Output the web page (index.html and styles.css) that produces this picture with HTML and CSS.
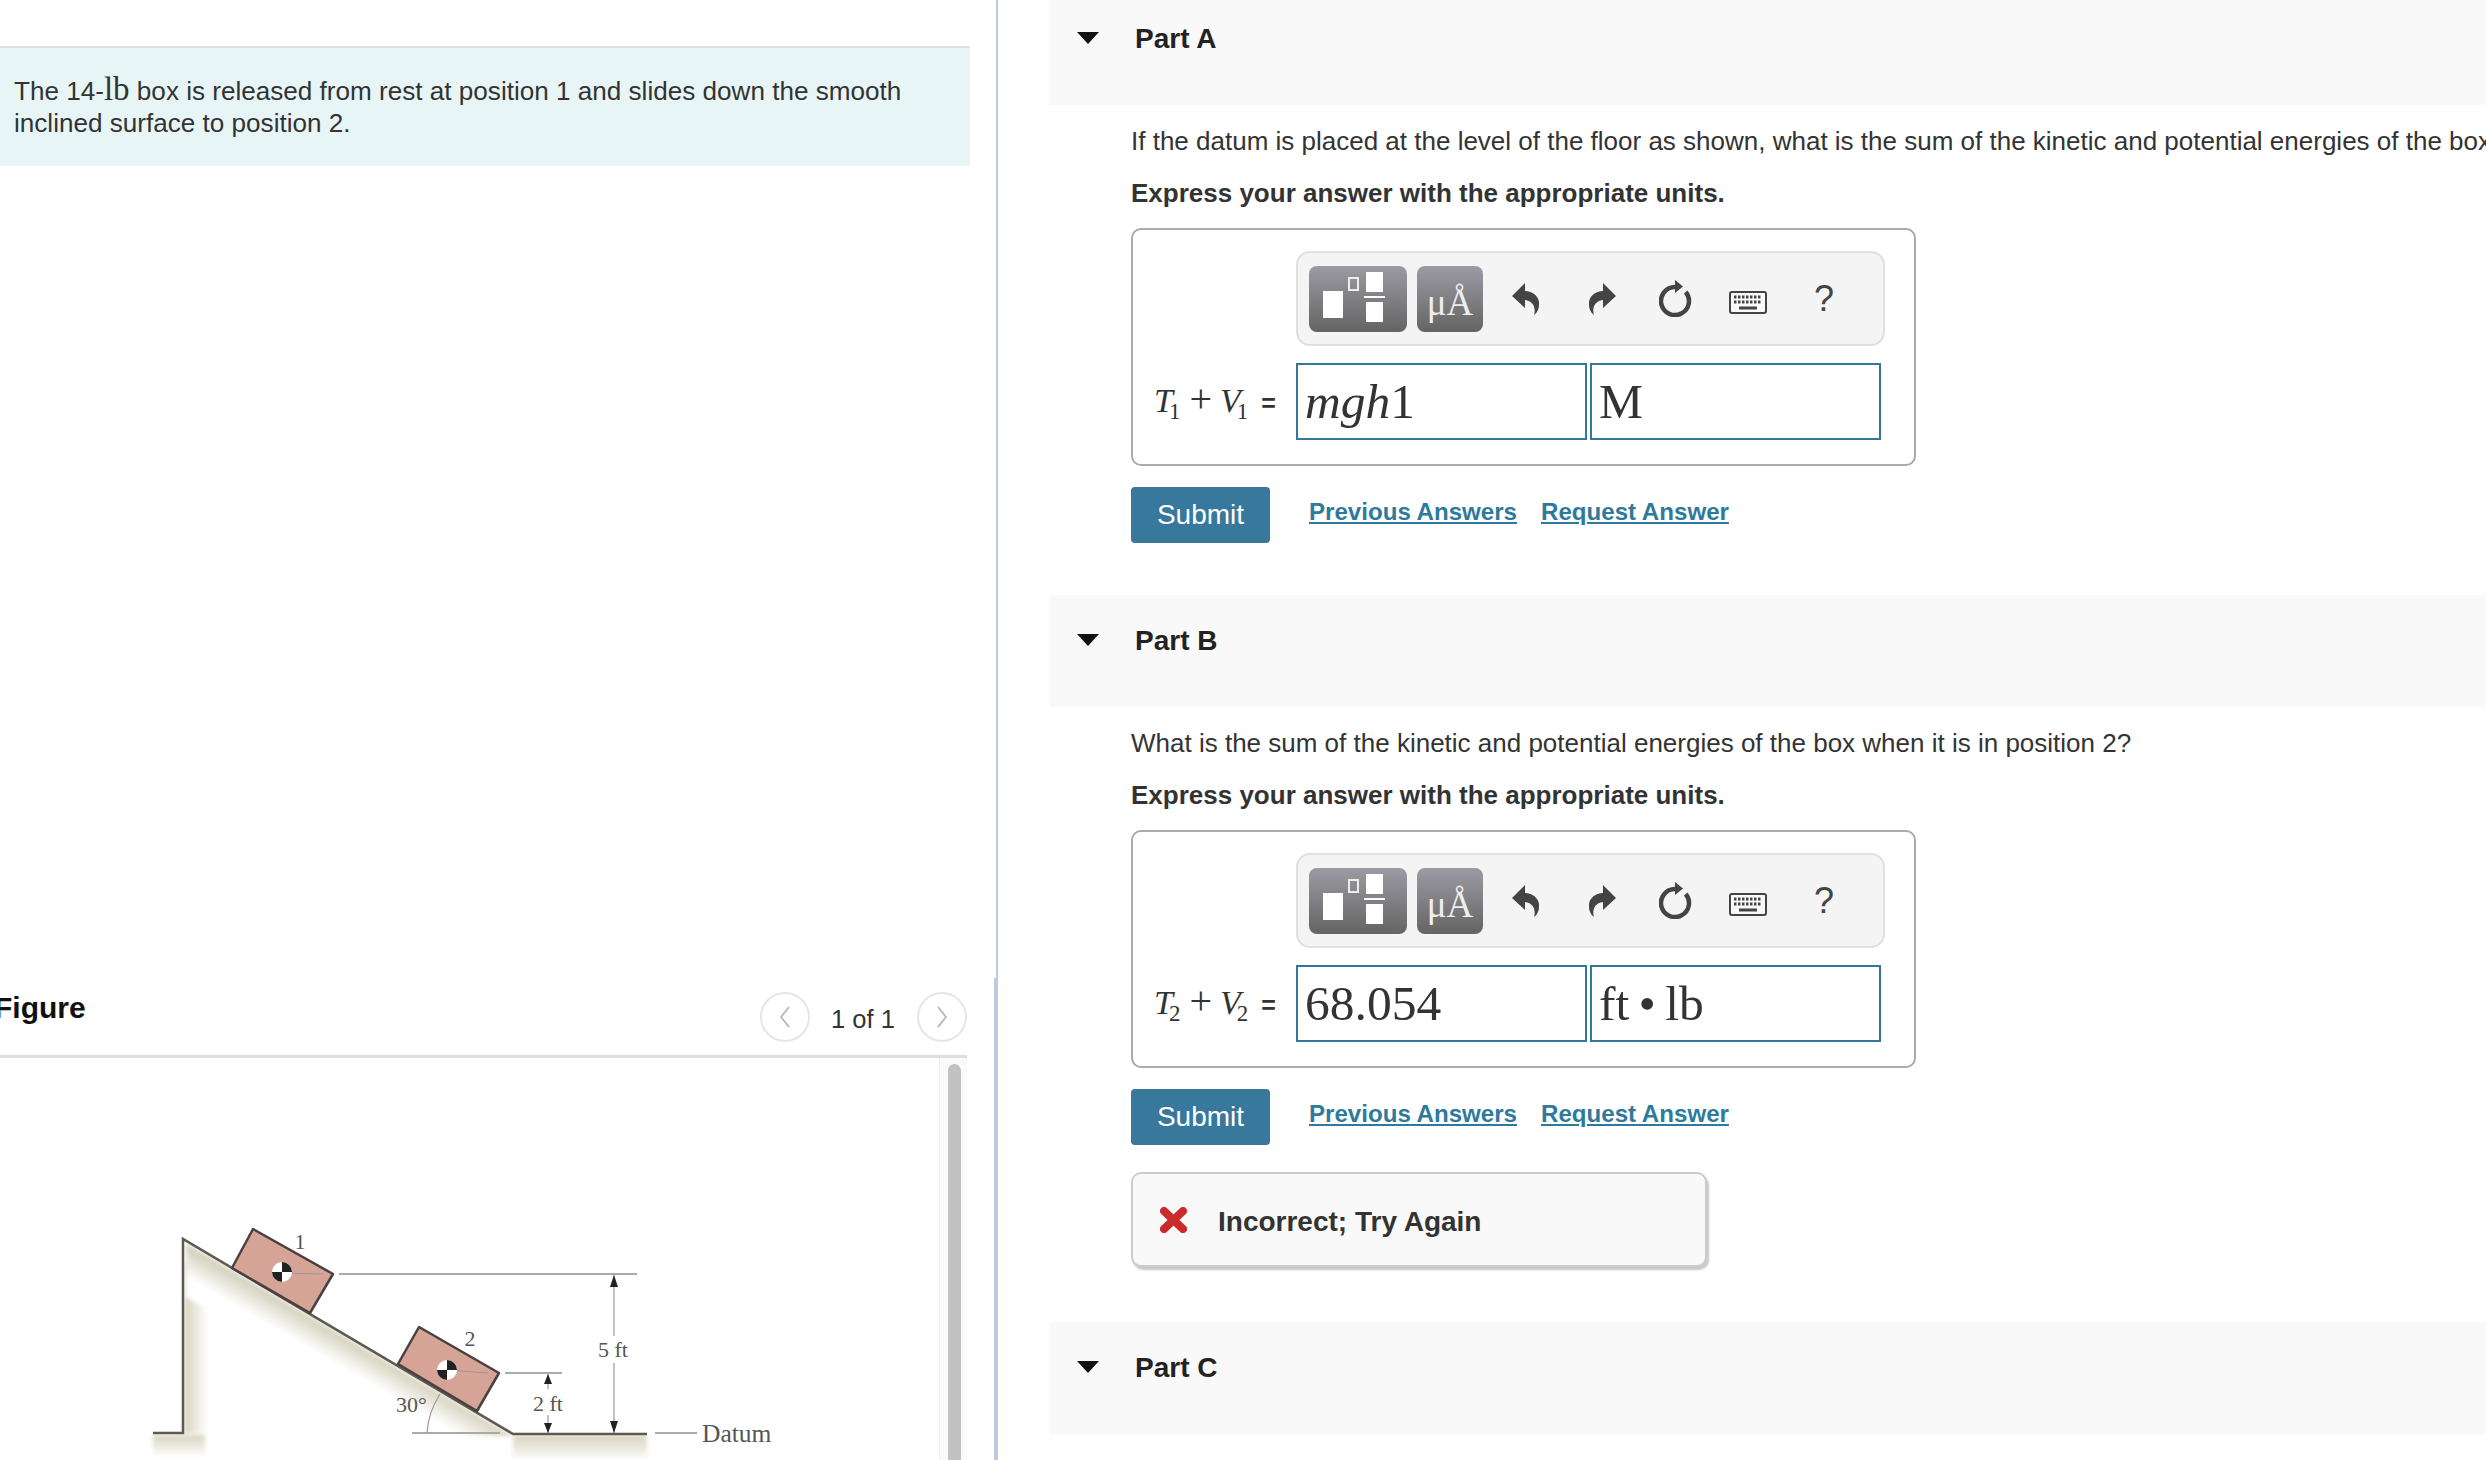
FILE: index.html
```html
<!DOCTYPE html>
<html lang="en">
<head>
    <meta charset="UTF-8">
    <title>Mastering Physics - Box on incline</title>
    <link rel="stylesheet" href="styles.css">
</head>
<body>
    <div class="left-pane">
        <div class="left-top">
            <div class="intro">
                The 14-<span class="unit">lb</span> box is released from rest at position 1 and slides down the smooth inclined surface to position 2.
            </div>
        </div>
        <div class="left-bottom">
            <div class="figure-head">
                <h2>Figure</h2>
                <div class="pager">
                    <span class="pager-btn">
                        <svg width="10" height="22" viewBox="0 0 10 22"><polyline points="9,1 1,11 9,21"/></svg>
                    </span>
                    <span class="pager-count">1 of 1</span>
                    <span class="pager-btn">
                        <svg width="10" height="22" viewBox="0 0 10 22"><polyline points="1,1 9,11 1,21"/></svg>
                    </span>
                </div>
            </div>
            <div class="figure-panel">
                <svg class="diagram" width="939" height="403" viewBox="0 1057 939 403">
                    <defs>
                        <linearGradient id="wallShade" x1="0" y1="0" x2="1" y2="0">
                            <stop offset="0" stop-color="#d6d2bd"/>
                            <stop offset="1" stop-color="#fff"/>
                        </linearGradient>
                        <linearGradient id="slopeShade" gradientUnits="userSpaceOnUse" x1="348" y1="1335" x2="333" y2="1361">
                            <stop offset="0" stop-color="#d0ccb6"/>
                            <stop offset="1" stop-color="#fff"/>
                        </linearGradient>
                        <linearGradient id="floorShade" x1="0" y1="0" x2="0" y2="1">
                            <stop offset="0" stop-color="#d6d2bd"/>
                            <stop offset="1" stop-color="#fff"/>
                        </linearGradient>
                        <filter id="soft" x="-10%" y="-10%" width="120%" height="120%">
                            <feGaussianBlur stdDeviation="2"/>
                        </filter>
                    </defs>
                    <!-- shading under the ramp and floor -->
                    <g filter="url(#soft)">
                        <rect x="184" y="1262" width="24" height="170" fill="url(#wallShade)"/>
                        <polygon points="186,1242 513,1435 425,1435 186,1296" fill="url(#slopeShade)"/>
                        <rect x="153" y="1434" width="52" height="22" fill="url(#floorShade)"/>
                        <rect x="513" y="1434" width="134" height="26" fill="url(#floorShade)"/>
                    </g>
                    <!-- ramp outline -->
                    <polyline class="ramp" points="153,1432 183,1432 183,1238 513,1433 647,1433"/>
                    <!-- boxes -->
                    <polygon class="box" points="253,1228 333,1273 310,1312 232,1267"/>
                    <polygon class="box" points="419,1326 499,1372 477,1410 398,1363"/>
                    <line class="thin" x1="282" y1="1272" x2="323" y2="1273"/>
                    <line class="thin" x1="447" y1="1369" x2="488" y2="1372"/>
                    <circle cx="282" cy="1271" r="10" fill="#fff"/>
                    <path d="M282 1271 L282 1261 A10 10 0 0 1 292 1271 Z M282 1271 L282 1281 A10 10 0 0 1 272 1271 Z" fill="#222"/>
                    <circle cx="447" cy="1369" r="10" fill="#fff"/>
                    <path d="M447 1369 L447 1359 A10 10 0 0 1 457 1369 Z M447 1369 L447 1379 A10 10 0 0 1 437 1369 Z" fill="#222"/>
                    <!-- dimensions -->
                    <line class="dim" x1="339" y1="1273" x2="637" y2="1273"/>
                    <line class="dim" x1="505" y1="1372" x2="562" y2="1372"/>
                    <line class="dim" x1="412" y1="1432" x2="500" y2="1432"/>
                    <line class="dim" x1="655" y1="1432" x2="697" y2="1432"/>
                    <line class="thin" x1="614" y1="1274" x2="614" y2="1335"/>
                    <line class="thin" x1="614" y1="1362" x2="614" y2="1432"/>
                    <line class="thin" x1="548" y1="1373" x2="548" y2="1388"/>
                    <line class="thin" x1="548" y1="1414" x2="548" y2="1432"/>
                    <path class="thin no-fill" d="M440 1393 Q428 1412 427 1432"/>
                    <polygon class="arrow" points="614,1274 610,1286 618,1286"/>
                    <polygon class="arrow" points="614,1432 610,1420 618,1420"/>
                    <polygon class="arrow" points="548,1373 544,1383 552,1383"/>
                    <polygon class="arrow" points="548,1432 544,1422 552,1422"/>
                    <text x="300" y="1248" text-anchor="middle">1</text>
                    <text x="470" y="1345" text-anchor="middle">2</text>
                    <text x="396" y="1411">30°</text>
                    <text x="613" y="1356" text-anchor="middle">5 ft</text>
                    <text x="548" y="1410" text-anchor="middle">2 ft</text>
                    <text class="datum" x="702" y="1441">Datum</text>
                </svg>
                <div class="scrollbar"><div class="scroll-thumb"></div></div>
            </div>
        </div>
    </div>

    <div class="right-pane">
        <div class="part-head"><span class="caret"></span><h3>Part A</h3></div>
        <div class="part-body">
            <p class="question">If the datum is placed at the level of the floor as shown, what is the sum of the kinetic and potential energies of the box when it is in position 1?</p>
            <p class="hint">Express your answer with the appropriate units.</p>
            <div class="answer-box">
                <div class="toolbar">
                    <span class="tool tool-frac">
                        <i class="frac-solid"></i>
                        <i class="frac-small"></i>
                        <span class="frac-stack"><i></i><i class="frac-bar"></i><i></i></span>
                    </span>
                    <span class="tool tool-units">μÅ</span>
                    <svg class="ic-undo" width="27" height="32" viewBox="0 0 27 32"><path d="M0 13 L13 0 V8 C22 8 28 15 27 22 C27 26 25 30 22 32 C24 26 22 18 13 17 V25 Z"/></svg>
                    <svg class="ic-redo" width="27" height="32" viewBox="0 0 27 32"><path d="M0 13 L13 0 V8 C22 8 28 15 27 22 C27 26 25 30 22 32 C24 26 22 18 13 17 V25 Z"/></svg>
                    <svg class="ic-reset" width="34" height="37" viewBox="0 0 34 37"><path class="ring" d="M26.7 12 A14 14 0 1 1 16 7"/><polygon points="16,0 24,6.5 16,13"/></svg>
                    <svg class="ic-keys" width="38" height="23" viewBox="0 0 38 23"><rect class="kb-frame" x="1" y="1" width="36" height="21" rx="2"/><line x1="5" y1="6" x2="33" y2="6"/><line x1="5" y1="11" x2="33" y2="11"/><line class="kb-space" x1="10" y1="17" x2="28" y2="17"/></svg>
                    <span class="tool-help">?</span>
                </div>
                <div class="formula">
                    <span class="formula-label"><i>T</i><sub>1</sub><span class="plus">+</span><i>V</i><sub>1</sub><span class="eq">=</span></span>
                    <div class="field"><i>mgh</i>1</div>
                    <div class="field">M</div>
                </div>
            </div>
            <div class="actions">
                <button class="submit">Submit</button>
                <a href="#">Previous Answers</a>
                <a href="#">Request Answer</a>
            </div>
        </div>

        <div class="part-head"><span class="caret"></span><h3>Part B</h3></div>
        <div class="part-body">
            <p class="question">What is the sum of the kinetic and potential energies of the box when it is in position 2?</p>
            <p class="hint">Express your answer with the appropriate units.</p>
            <div class="answer-box">
                <div class="toolbar">
                    <span class="tool tool-frac">
                        <i class="frac-solid"></i>
                        <i class="frac-small"></i>
                        <span class="frac-stack"><i></i><i class="frac-bar"></i><i></i></span>
                    </span>
                    <span class="tool tool-units">μÅ</span>
                    <svg class="ic-undo" width="27" height="32" viewBox="0 0 27 32"><path d="M0 13 L13 0 V8 C22 8 28 15 27 22 C27 26 25 30 22 32 C24 26 22 18 13 17 V25 Z"/></svg>
                    <svg class="ic-redo" width="27" height="32" viewBox="0 0 27 32"><path d="M0 13 L13 0 V8 C22 8 28 15 27 22 C27 26 25 30 22 32 C24 26 22 18 13 17 V25 Z"/></svg>
                    <svg class="ic-reset" width="34" height="37" viewBox="0 0 34 37"><path class="ring" d="M26.7 12 A14 14 0 1 1 16 7"/><polygon points="16,0 24,6.5 16,13"/></svg>
                    <svg class="ic-keys" width="38" height="23" viewBox="0 0 38 23"><rect class="kb-frame" x="1" y="1" width="36" height="21" rx="2"/><line x1="5" y1="6" x2="33" y2="6"/><line x1="5" y1="11" x2="33" y2="11"/><line class="kb-space" x1="10" y1="17" x2="28" y2="17"/></svg>
                    <span class="tool-help">?</span>
                </div>
                <div class="formula">
                    <span class="formula-label"><i>T</i><sub>2</sub><span class="plus">+</span><i>V</i><sub>2</sub><span class="eq">=</span></span>
                    <div class="field">68.054</div>
                    <div class="field">ft • lb</div>
                </div>
            </div>
            <div class="actions">
                <button class="submit">Submit</button>
                <a href="#">Previous Answers</a>
                <a href="#">Request Answer</a>
            </div>
            <div class="feedback">
                <svg width="27" height="26" viewBox="0 0 27 26"><line x1="4" y1="4" x2="23" y2="22"/><line x1="23" y1="4" x2="4" y2="22"/></svg>
                <span>Incorrect; Try Again</span>
            </div>
        </div>

        <div class="part-head"><span class="caret"></span><h3>Part C</h3></div>
    </div>
</body>
</html>
```

FILE: styles.css
```css
* { margin: 0; padding: 0; box-sizing: border-box; }
html, body { height: 100%; }
body {
    width: 2486px;
    height: 1460px;
    overflow: hidden;
    display: flex;
    background: #fff;
    color: #333;
    font-family: "Liberation Sans", Arial, sans-serif;
}

/* left pane */
.left-pane {
    width: 998px;
    height: 1460px;
    flex: none;
    display: flex;
    flex-direction: column;
}
.left-top {
    height: 978px;
    padding-top: 46px;
    border-right: 2px solid #bccbdf;
}
.left-bottom {
    flex: 1;
    min-height: 0;
    padding-top: 12px;
    display: flex;
    flex-direction: column;
    border-right: 4px solid #bccbdf;
}
.intro {
    width: 970px;
    height: 120px;
    padding: 27px 40px 0 14px;
    background: #e8f5f6;
    border-top: 2px solid #dfe2e4;
    font-size: 26.1px;
    line-height: 32.4px;
}
.unit { font-family: "Liberation Serif", serif; font-size: 33px; line-height: 0; }
.figure-head {
    width: 967px;
    height: 65px;
    padding-top: 2px;
    display: flex;
    justify-content: space-between;
    align-items: flex-start;
}
.figure-head h2 {
    margin-left: -6px;
    font-size: 30px;
    line-height: 32px;
    color: #111;
}
.pager { display: flex; align-items: center; }
.pager-btn {
    width: 50px;
    height: 50px;
    display: flex;
    align-items: center;
    justify-content: center;
    border: 2px solid #e6e6e6;
    border-radius: 50%;
}
.pager-btn polyline { fill: none; stroke: #b9b9b9; stroke-width: 2; }
.pager-count { margin: 5px 22px 0 21px; font-size: 25.6px; }
.figure-panel {
    flex: 1;
    width: 967px;
    display: flex;
    border-top: 3px solid #dedede;
    min-height: 0;
}
.diagram { flex: none; width: 939px; }
.diagram text { font-family: "Liberation Serif", serif; font-size: 22px; fill: #555; }
.diagram .datum { font-size: 25.5px; }
.ramp { fill: none; stroke: #5c5a52; stroke-width: 2.5; }
.box { fill: #d6a497; stroke: #4a4040; stroke-width: 2.5; stroke-linejoin: round; }
.thin { stroke: #999; stroke-width: 1.2; }
.no-fill { fill: none; }
.dim { stroke: #aaa; stroke-width: 2; }
.arrow { fill: #222; }
.scrollbar {
    flex: 1;
    padding: 6px 6px 0 8px;
    background: #fafafa;
    border-left: 1px solid #eee;
}
.scroll-thumb { height: 100%; background: #c1c1c1; border-radius: 8px 8px 0 0; }

/* right pane */
.right-pane {
    flex: 1;
    min-width: 0;
    margin-top: -7px;
    padding-left: 52px;
    overflow: hidden;
}
.part-head {
    height: 112px;
    padding: 30px 0 0 27px;
    display: flex;
    align-items: flex-start;
    background: #f9f9f9;
}
.caret {
    margin: 9px 36px 0 0;
    border-left: 11px solid transparent;
    border-right: 11px solid transparent;
    border-top: 12px solid #111;
}
.part-head h3 { font-size: 28px; line-height: 32px; color: #222; }
.part-body { padding: 20px 0 52px 81px; }
.question { font-size: 26px; line-height: 32px; white-space: nowrap; }
.hint { margin-top: 20px; font-size: 26px; line-height: 32px; font-weight: bold; }
.answer-box {
    width: 785px;
    height: 238px;
    margin-top: 19px;
    padding: 21px 0 0 163px;
    border: 2px solid #aaa;
    border-radius: 10px;
}
.toolbar {
    width: 589px;
    height: 95px;
    padding-left: 11px;
    display: flex;
    align-items: center;
    background: #f4f4f4;
    border: 2px solid #e0e0e0;
    border-radius: 14px;
}
.tool {
    height: 66px;
    display: block;
    border-radius: 8px;
    background: linear-gradient(#9c9ba4, #646464);
}
.tool-frac {
    width: 98px;
    display: flex;
    padding: 6px 0 0 14px;
}
.frac-solid { width: 20px; height: 27px; margin-top: 19px; background: #fff; }
.frac-small { width: 11px; height: 14px; margin: 5px 0 0 5px; border: 2px solid #eee; }
.frac-stack { width: 21px; margin-left: 5px; display: flex; flex-direction: column; align-items: center; }
.frac-stack i { width: 17px; height: 20px; background: #fff; }
.frac-stack .frac-bar { width: 21px; height: 2px; margin: 4px 0; }
.tool-units {
    width: 66px;
    margin-left: 10px;
    text-align: center;
    font-family: "Liberation Serif", serif;
    font-size: 37px;
    line-height: 74px;
    color: #eee;
}
.toolbar svg { flex: none; fill: #444; }
.ic-undo { margin-left: 29px; }
.ic-redo { margin-left: 50px; transform: scaleX(-1); }
.ic-reset { margin-left: 43px; }
.ic-reset .ring { fill: none; stroke: #444; stroke-width: 4.5; }
.ic-keys { margin-left: 36px; margin-top: 7px; }
.ic-keys .kb-frame { fill: #fafafa; stroke: #444; stroke-width: 2; }
.ic-keys line { stroke: #444; stroke-width: 3; stroke-dasharray: 2.5 1.5; }
.ic-keys .kb-space { stroke-dasharray: none; }
.tool-help { margin-left: 47px; font-size: 36px; color: #444; }
.formula { display: flex; align-items: center; margin: 17px 0 0 -142px; }
.formula-label {
    width: 142px;
    font-family: "Liberation Serif", serif;
    font-size: 34px;
    line-height: 40px;
    white-space: nowrap;
}
.formula-label sub { margin-left: -4px; font-size: 23px; line-height: 0; }
.plus { margin: 0 8px 0 9px; font-size: 40px; line-height: 0; }
.eq { margin-left: 13px; font-family: "Liberation Sans", sans-serif; font-size: 25px; font-weight: bold; }
.field {
    width: 291px;
    height: 77px;
    margin-right: 3px;
    padding-left: 7px;
    display: flex;
    align-items: center;
    border: 2px solid #35779a;
    font-family: "Liberation Serif", serif;
    font-size: 49.5px;
    word-spacing: -3px;
    white-space: pre;
}
.actions { display: flex; align-items: center; margin-top: 21px; }
.submit {
    width: 139px;
    height: 56px;
    margin-right: 39px;
    border: none;
    border-radius: 4px;
    background: #37789c;
    color: #fff;
    font-family: "Liberation Sans", sans-serif;
    font-size: 28px;
}
.actions a {
    margin: 0 24px 7px 0;
    color: #2e7a9c;
    font-size: 24.1px;
    font-weight: bold;
}
.feedback {
    width: 576px;
    height: 95px;
    margin: 27px 0 3px;
    padding-left: 27px;
    display: flex;
    align-items: center;
    background: #f9f9f9;
    border: 2px solid #ccc;
    border-radius: 10px;
    box-shadow: 2px 3px 2px #c8c8c8;
    font-size: 28px;
    font-weight: bold;
}
.feedback svg { flex: none; margin-right: 31px; }
.feedback span { margin-top: 5px; }
.feedback line { stroke: #cc2a2a; stroke-width: 8; stroke-linecap: round; }
```
